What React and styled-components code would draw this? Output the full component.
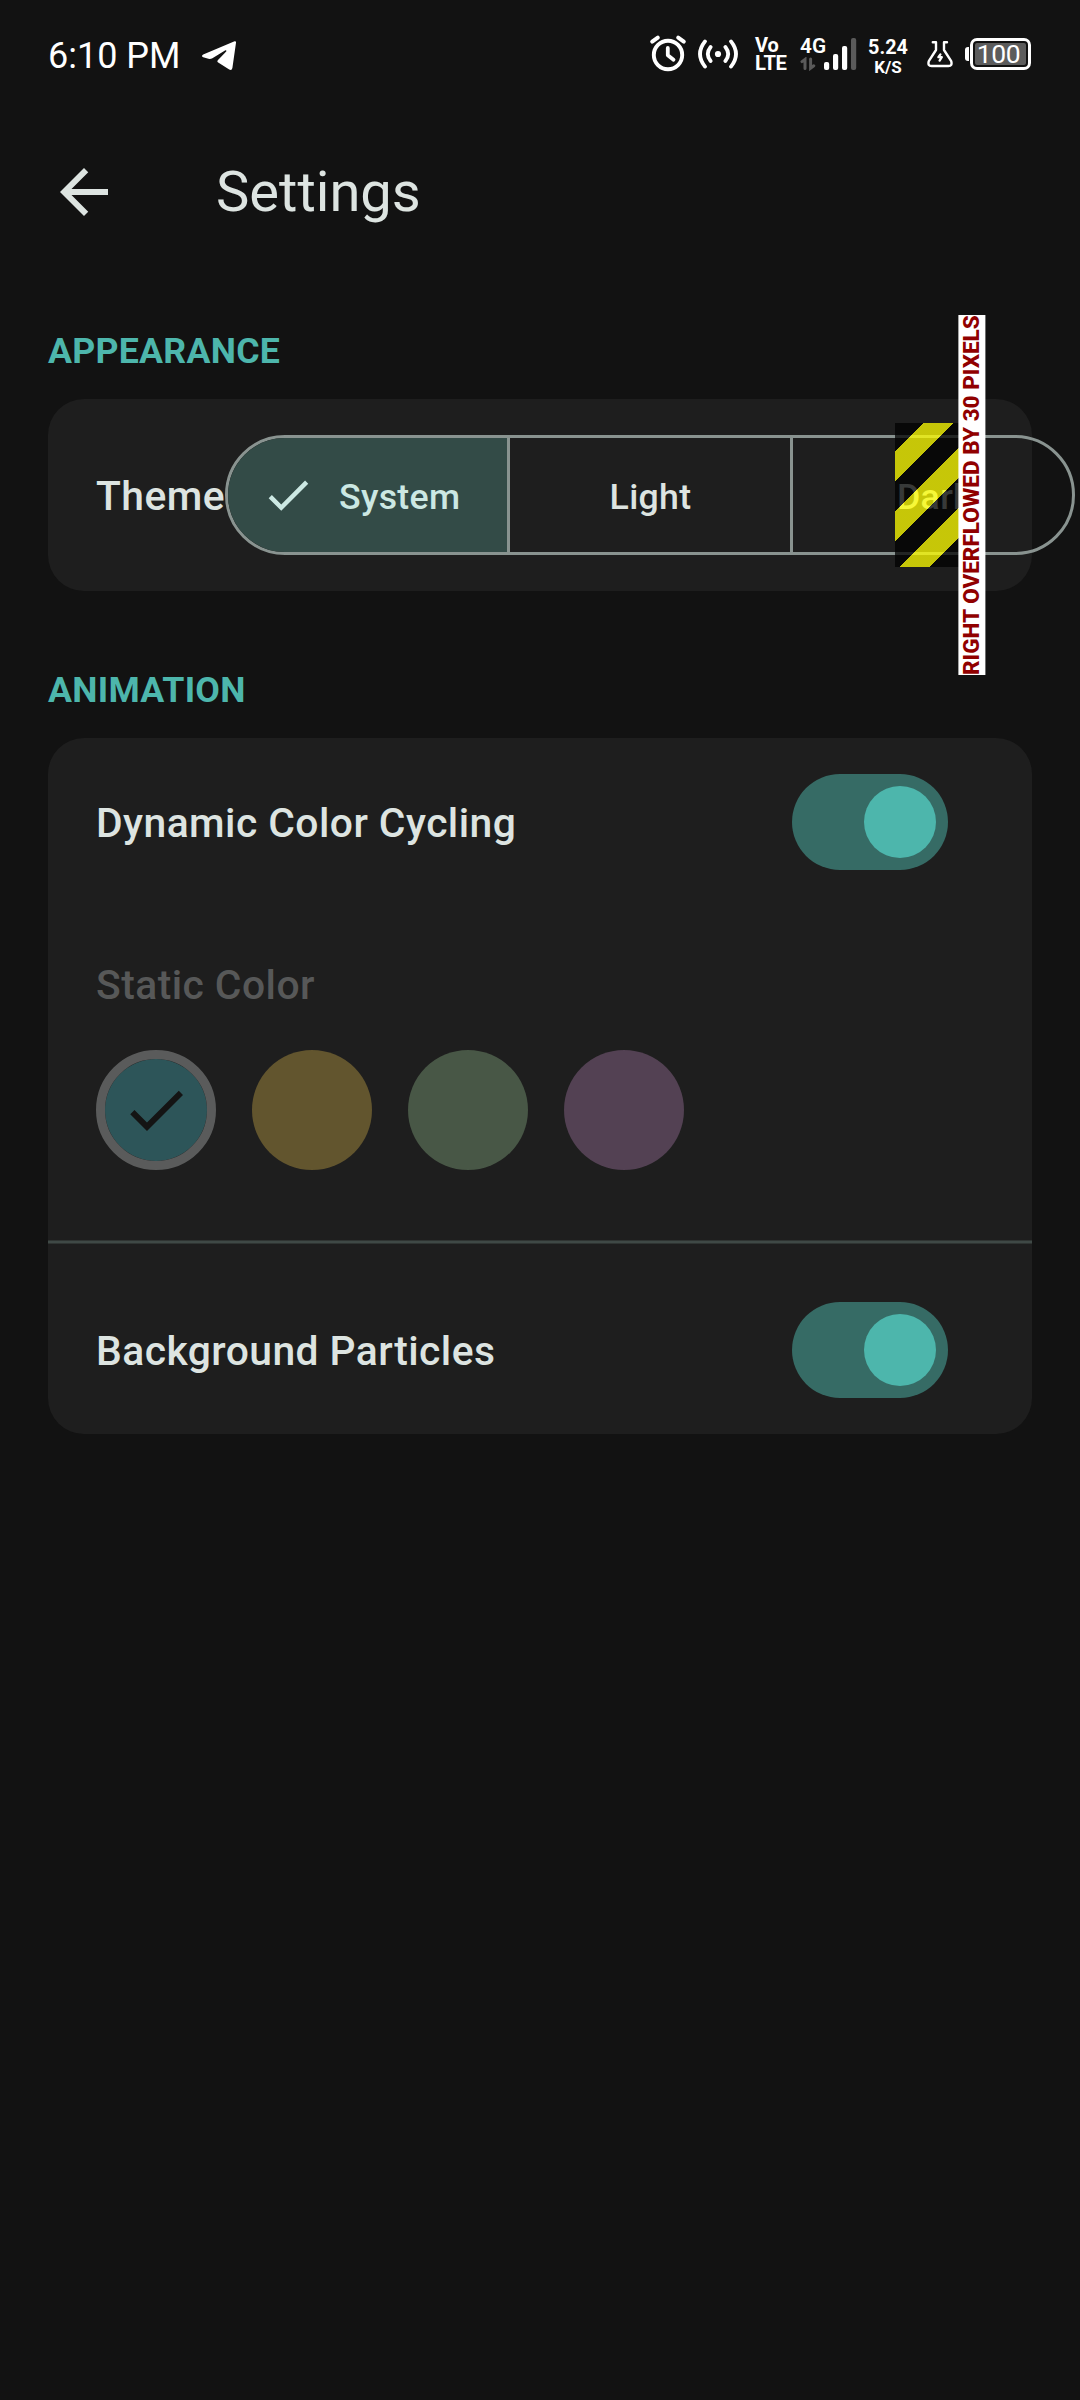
import React from 'react';
import styled, { createGlobalStyle } from 'styled-components';

const GlobalStyle = createGlobalStyle`
  *, *::before, *::after { box-sizing: border-box; }
  html, body { margin: 0; background: #121212; }
  body { font-family: Roboto, "Liberation Sans", sans-serif; overflow-x: hidden; }
`;

const Screen = styled.main`
  width: 1080px;
  height: 2400px;
  overflow: hidden;
  background: #121212;
  color: #dde4e1;
`;

const StatusBar = styled.header`
  display: flex;
  align-items: center;
  height: 108px;
  padding: 0 49px 0 48px;
  color: #fff;
`;

const Clock = styled.time`
  width: 132px;
  margin-right: 22px;
  font-size: 36px;
  line-height: 44px;
  padding-top: 3px;
  white-space: nowrap;
`;

const StatusIcons = styled.div`
  display: flex;
  align-items: center;
  margin-left: auto;
`;

const StatusSvg = styled.svg`
  display: block;
  flex: none;
  margin-top: ${(p) => p.$drop || 0}px;
  margin-left: ${(p) => p.$gap || 0}px;
`;

const Stack = styled.div`
  display: flex;
  flex-direction: column;
  align-items: ${(p) => p.$align || 'flex-start'};
  gap: ${(p) => p.$rowGap || 0}px;
  width: ${(p) => p.$width}px;
  height: 36px;
  padding-top: ${(p) => p.$top || 0}px;
  margin-left: ${(p) => p.$gap}px;
  white-space: nowrap;
`;

const StackLine = styled.span`
  display: block;
  font-size: ${(p) => p.$size}px;
  font-weight: ${(p) => p.$weight || 700};
  line-height: 18px;
  letter-spacing: ${(p) => p.$spacing || 0}px;
`;

const Battery = styled.div`
  display: flex;
  align-items: center;
  margin-left: 12px;
`;

const BatteryTip = styled.span`
  width: 4px;
  height: 14px;
  margin-right: 1px;
  border-radius: 3px 0 0 3px;
  background: #fff;
`;

const BatteryBody = styled.span`
  display: flex;
  width: 61px;
  height: 32px;
  padding: 2px;
  border: 3px solid #fff;
  border-radius: 7px;
`;

const BatteryLevel = styled.span`
  flex: 1;
  padding-right: 4px;
  border-radius: 2px;
  background: #5c5c5c;
  font-size: 26.5px;
  line-height: 22px;
  text-align: center;
  letter-spacing: -0.4px;
`;

const AppBar = styled.div`
  display: flex;
  align-items: center;
  height: 168px;
  padding: 0 48px;
`;

const BackButton = styled.button`
  display: flex;
  width: 72px;
  height: 72px;
  margin-right: 96px;
  padding: 0;
  border: 0;
  background: none;
  color: #dde4e1;
`;

const Title = styled.h1`
  margin: 0;
  padding-bottom: 1px;
  font-size: 56.1px;
  font-weight: 400;
  line-height: 72px;
`;

const Content = styled.div`
  display: flex;
  flex-direction: column;
  padding: 51px 48px 0;
`;

const Section = styled.section`
  & + & { margin-top: 75px; }
`;

const SectionTitle = styled.h2`
  margin: 0 0 24px;
  color: #4db6ac;
  font-size: 35.7px;
  font-weight: 700;
  line-height: 48px;
  letter-spacing: 0.26px;
`;

const Card = styled.div`
  border-radius: 36px;
  background: #1e1e1e;
`;

const ThemeRow = styled.div`
  position: relative;
  display: flex;
  align-items: center;
  height: 192px;
  padding-left: 48px;
`;

const Label = styled.span`
  display: block;
  padding-top: 1px;
  color: ${(p) => (p.$disabled ? '#575858' : '#dde4e1')};
  font-size: 40.8px;
  font-weight: 500;
  line-height: 60px;
  letter-spacing: 0.45px;
  white-space: nowrap;
`;

const ThemeLabel = styled(Label)`
  flex: none;
  width: 129px;
`;

const Segments = styled.div`
  display: grid;
  grid-template-columns: 279px 283px 282px;
  flex: none;
  width: 850px;
  height: 120px;
  overflow: hidden;
  border: 3px solid #899390;
  border-radius: 60px;
`;

const Segment = styled.button`
  display: flex;
  align-items: center;
  justify-content: ${(p) => (p.$selected ? 'flex-start' : 'center')};
  gap: 24px;
  padding: 0 0 0 ${(p) => p.$inset || 0}px;
  border: 0;
  border-left: ${(p) => (p.$divided ? '3px solid #899390' : '0')};
  background: ${(p) => (p.$selected ? '#334b47' : 'transparent')};
  color: ${(p) => (p.$selected ? '#cce8e3' : '#dde4e1')};
  font-family: inherit;
  font-size: 35.7px;
  font-weight: 500;
  letter-spacing: 0.3px;
`;

const SegmentText = styled.span`
  padding-top: 3px;
  line-height: 42px;
`;

const OverflowStripes = styled.div`
  position: absolute;
  top: 24px;
  left: 847px;
  width: 90px;
  height: 144px;
  background: repeating-linear-gradient(
    135deg,
    rgba(0, 0, 0, 0.75) 0 20px,
    rgba(255, 255, 0, 0.75) 20px 41.2px,
    rgba(0, 0, 0, 0.75) 41.2px 42.43px
  );
`;

const OverflowLabel = styled.div`
  position: absolute;
  top: -84px;
  left: 910.3px;
  width: 27.4px;
  height: 360px;
  background: #fff;
  color: #900000;
  font-size: 22.5px;
  font-weight: 800;
  line-height: 27.4px;
  white-space: nowrap;
  writing-mode: vertical-rl;
  transform: rotate(180deg);
`;

const SwitchRow = styled.div`
  display: flex;
  align-items: center;
  justify-content: space-between;
  height: 168px;
  padding: 0 84px 0 48px;
`;

const Switch = styled.button`
  display: flex;
  align-items: center;
  justify-content: flex-end;
  width: 156px;
  height: 96px;
  padding: 0 12px;
  border: 0;
  border-radius: 48px;
  background: #366b65;
`;

const Thumb = styled.span`
  width: 72px;
  height: 72px;
  border-radius: 50%;
  background: #4db6ac;
`;

const ColorPanel = styled.div`
  padding: 48px 48px 70px;
`;

const Swatches = styled.div`
  display: flex;
  gap: 36px;
  margin-top: 35px;
`;

const Swatch = styled.span`
  display: flex;
  align-items: center;
  justify-content: center;
  width: 120px;
  height: 120px;
  border: ${(p) => (p.$selected ? '9px solid #5a5b5b' : '0')};
  border-radius: 50%;
  background: ${(p) => p.$color};
  background-clip: padding-box;
  color: #141414;

  svg { flex: none; }
`;

const Divider = styled.hr`
  height: 4px;
  margin: 0 0 22px;
  border: solid #2f3432;
  border-width: 1px 0;
  background: #3f4946;
`;

const CheckIcon = ({ size }) => (
  <svg width={size} height={size} viewBox="0 0 24 24" fill="currentColor">
    <path d="M9 16.17 4.83 12l-1.42 1.41L9 19 21 7l-1.41-1.41z" />
  </svg>
);

const BackIcon = () => (
  <svg width="72" height="72" viewBox="0 0 24 24" fill="currentColor">
    <path d="M20 11H7.83l5.59-5.59L12 4l-8 8 8 8 1.41-1.41L7.83 13H20v-2z" />
  </svg>
);

const PlaneIcon = () => (
  <StatusSvg $drop={3} width="34" height="30" viewBox="0 0 34 30" fill="#fff">
    <path d="M32.6.2Q34.2-.2 34 1.8L30.4 27Q29.8 30 27.2 28.6L16.2 21.6Q14.6 20.4 16 19L24.2 10.4Q25 9 23.4 9.2L10.4 17.2Q8.6 18.2 6.4 17.8L1.2 16.2Q-1.2 15.2 1.2 13.4Z" />
  </StatusSvg>
);

const AlarmIcon = () => (
  <StatusSvg $drop={-2} width="38" height="38" viewBox="0 0 38 38" fill="none" stroke="#fff" strokeLinecap="round">
    <circle cx="19" cy="21" r="14.2" strokeWidth="3.9" />
    <path d="M18.8 14v7.3l5.7 4.4" strokeWidth="3.8" strokeLinejoin="round" />
    <path d="M3.2 7.6 8.8 3.6M34.8 7.6 29.2 3.6" strokeWidth="4" />
  </StatusSvg>
);

const HotspotIcon = () => (
  <StatusSvg $gap={11} width="40" height="32" viewBox="0 0 40 32" fill="none" stroke="#fff" strokeWidth="3.8" strokeLinecap="round">
    <circle cx="20" cy="16" r="3.1" fill="#fff" stroke="none" />
    <path d="M12.6 9Q7 16 12.6 23M27.4 9Q33 16 27.4 23M7 3.4Q-3 16 7 28.6M33 3.4Q43 16 33 28.6" />
  </StatusSvg>
);

const SignalIcon = () => (
  <StatusSvg width="34" height="32" viewBox="0 0 34 32">
    <g fill="#fff">
      <rect x="1" y="24" width="5.2" height="8" rx="2" />
      <rect x="10" y="16" width="5.2" height="16" rx="2" />
      <rect x="19" y="8" width="5.2" height="24" rx="2" />
    </g>
    <rect x="28" y="0" width="5.2" height="32" rx="2" fill="#5a5a5a" />
  </StatusSvg>
);

const DataArrows = () => (
  <StatusSvg width="16" height="14" viewBox="0 0 16 14" fill="none" stroke="#5a5a5a" strokeWidth="3" strokeLinecap="round">
    <path d="M2 4.6 5 2.4V11.6M10.6 2V11.2L13.8 8.8" />
  </StatusSvg>
);

const FlaskIcon = () => (
  <StatusSvg $gap={19} width="26" height="28" viewBox="0 0 26 28" fill="none" stroke="#fff" strokeWidth="2.4" strokeLinecap="round" strokeLinejoin="round">
    <path d="M5.8 2.2H9V10L1.8 21.2Q.4 26 4.6 26H21.4Q25.6 26 24.2 21.2L17 10V2.2H20" />
    <path d="M13.4 14.4 11.4 17.2H14.8L12.6 20.6" strokeWidth="2.3" />
  </StatusSvg>
);

const THEMES = [
  { name: 'System', inset: 33, selected: true },
  { name: 'Light', inset: 1 },
  { name: 'Dark', inset: 4 },
];
const COLORS = ['#2d5559', '#62552e', '#485746', '#534153'];

const SwitchSetting = ({ label }) => (
  <SwitchRow>
    <Label>{label}</Label>
    <Switch role="switch" aria-checked="true" aria-label={label}>
      <Thumb />
    </Switch>
  </SwitchRow>
);

export default function App() {
  return (
    <Screen>
      <GlobalStyle />
      <StatusBar>
        <Clock>6:10 PM</Clock>
        <PlaneIcon />
        <StatusIcons>
          <AlarmIcon />
          <HotspotIcon />
          <Stack $width={32} $gap={17}>
            <StackLine $size={20}>Vo</StackLine>
            <StackLine $size={20.2} $spacing={-0.3}>LTE</StackLine>
          </Stack>
          <Stack $width={23} $gap={13} $rowGap={2} $top={1}>
            <StackLine $size={20.8} $weight={600}>4G</StackLine>
            <DataArrows />
          </Stack>
          <SignalIcon />
          <Stack $width={40} $gap={11} $rowGap={1} $align="center" $top={3}>
            <StackLine $size={19.8}>5.24</StackLine>
            <StackLine $size={17}>K/S</StackLine>
          </Stack>
          <FlaskIcon />
          <Battery>
            <BatteryTip />
            <BatteryBody>
              <BatteryLevel>100</BatteryLevel>
            </BatteryBody>
          </Battery>
        </StatusIcons>
      </StatusBar>
      <AppBar>
        <BackButton aria-label="Back">
          <BackIcon />
        </BackButton>
        <Title>Settings</Title>
      </AppBar>
      <Content>
        <Section>
          <SectionTitle>APPEARANCE</SectionTitle>
          <Card>
            <ThemeRow>
              <ThemeLabel>Theme</ThemeLabel>
              <Segments>
                {THEMES.map(({ name, inset, selected }, i) => (
                  <Segment key={name} $selected={selected} $inset={inset} $divided={i > 0}>
                    {selected && <CheckIcon size={54} />}
                    <SegmentText>{name}</SegmentText>
                  </Segment>
                ))}
              </Segments>
              <OverflowStripes />
              <OverflowLabel>RIGHT OVERFLOWED BY 30 PIXELS</OverflowLabel>
            </ThemeRow>
          </Card>
        </Section>
        <Section>
          <SectionTitle>ANIMATION</SectionTitle>
          <Card>
            <SwitchSetting label="Dynamic Color Cycling" />
            <ColorPanel>
              <Label $disabled>Static Color</Label>
              <Swatches>
                {COLORS.map((color, i) => (
                  <Swatch key={color} $color={color} $selected={i === 0}>
                    {i === 0 && <CheckIcon size={72} />}
                  </Swatch>
                ))}
              </Swatches>
            </ColorPanel>
            <Divider />
            <SwitchSetting label="Background Particles" />
          </Card>
        </Section>
      </Content>
    </Screen>
  );
}
